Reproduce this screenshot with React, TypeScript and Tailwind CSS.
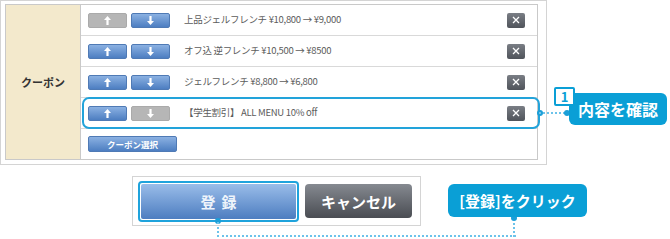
import React from "react";

const rows = [
  { text: "上品ジェルフレンチ ¥10,800 → ¥9,000", up: false, down: true },
  { text: "オフ込 逆フレンチ ¥10,500 → ¥8500", up: true, down: true },
  { text: "ジェルフレンチ ¥8,800 → ¥6,800", up: true, down: true },
  { text: "【学生割引】 ALL MENU 10% off", up: true, down: false, active: true },
];

function Arrow({ dir }: { dir: "up" | "down" }) {
  return (
    <svg width="7" height="9" viewBox="0 0 7 9" className={dir === "down" ? "rotate-180" : ""}>
      <path d="M3.5 0 L7 4 L4.6 4 L4.6 9 L2.4 9 L2.4 4 L0 4 Z" fill="#fff" />
    </svg>
  );
}

function MoveBtn({ dir, on }: { dir: "up" | "down"; on: boolean }) {
  return (
    <div
      className={`w-[39px] h-[15px] rounded-[2px] flex items-center justify-center ${
        on
          ? "bg-gradient-to-b from-[#8bb1e2] to-[#4d7ec1] border border-[#4f7ab5]"
          : "bg-[#b6b6b6] border border-[#aaaaaa]"
      }`}
    >
      <Arrow dir={dir} />
    </div>
  );
}

function CloseBtn() {
  return (
    <div className="w-[18px] h-[15px] rounded-[2px] bg-gradient-to-b from-[#7a7e85] to-[#50545b] flex items-center justify-center">
      <svg width="8" height="8" viewBox="0 0 8 8">
        <path d="M1 1 L7 7 M7 1 L1 7" stroke="#fff" strokeWidth="1.3" />
      </svg>
    </div>
  );
}

export default function App() {
  return (
    <div
      className="relative w-[670px] h-[239px] bg-white overflow-hidden"
      style={{ fontFamily: '"Noto Sans CJK JP", "Noto Sans", sans-serif' }}
    >
      <div className="w-[547px] h-[165px] border border-[#d4d4d4] pl-[4px] pr-[8px] pt-[3px]">
        <div className="flex border border-[#c9c9c9] h-[156px]">
          <div className="w-[75px] shrink-0 bg-[#f3e9cc] border-r border-[#c9c9c9] flex items-center justify-center">
            <span className="text-[11px] font-bold text-[#333] leading-none">クーポン</span>
          </div>
          <div className="flex-1 flex flex-col">
            {rows.map((r, i) => (
              <div
                key={i}
                className="relative h-[31px] shrink-0 border-b border-[#d9d9d9] flex items-center pl-[7px] pr-[12px]"
              >
                {r.active && (
                  <>
                    <div className="absolute left-[1px] right-[-3px] top-[-1px] bottom-[-1px] border-2 border-[#22a3da] rounded-[7px]" />
                    <div className="absolute right-[-6px] top-[12px] w-[6px] h-[6px] rounded-full bg-[#1b9fd8]" />
                  </>
                )}
                <div className="flex gap-[4px]">
                  <MoveBtn dir="up" on={r.up} />
                  <MoveBtn dir="down" on={r.down} />
                </div>
                <span className="ml-[14px] flex-1 text-[9.5px] text-[#5c5c5c] leading-none tracking-[-0.3px]">
                  {r.text}
                </span>
                <CloseBtn />
              </div>
            ))}
            <div className="flex-1 flex items-center pl-[7px]">
              <div className="w-[89px] h-[16px] rounded-[2px] bg-gradient-to-b from-[#8bb1e2] to-[#4d7ec1] border border-[#4f7ab5] flex items-center justify-center">
                <span className="text-[8.5px] text-white font-bold leading-none">クーポン選択</span>
              </div>
            </div>
          </div>
        </div>
      </div>

      <div className="ml-[132px] mt-[11px] w-[289px] h-[50px] border border-[#d4d4d4] flex items-center pl-[5px] gap-[6px]">
        <div className="w-[161px] h-[41px] rounded-[4px] border-2 border-[#1fa3dc] p-[1px] mt-[1px]">
          <div className="w-full h-full rounded-[2px] bg-gradient-to-b from-[#9abde9] to-[#4d7dc0] flex items-center justify-center">
            <span className="text-[15px] font-bold text-[#eef4fb] tracking-[6px] leading-none pl-[6px]">登録</span>
          </div>
        </div>
        <div className="w-[107px] h-[34px] rounded-[4px] bg-gradient-to-b from-[#868a91] to-[#4a4d53] flex items-center justify-center">
          <span className="text-[15px] font-bold text-white leading-none">キャンセル</span>
        </div>
      </div>

      {/* callout 1 */}
      <div className="absolute left-[539px] top-[112px] w-[30px] border-t-2 border-dotted border-[#6cc3ea]" />
      <div className="absolute left-[564px] top-[110px] w-[6px] h-[6px] rounded-full bg-[#1b9fd8]" />
      <div className="absolute left-[569px] top-[93px] w-[98px] h-[32px] rounded-[6px] bg-[#0a9fd6] flex items-center justify-center">
        <span className="text-[16px] font-bold text-white leading-none">内容を確認</span>
      </div>
      <div className="absolute left-[554px] top-[87px] w-[21px] h-[19px] bg-white border-2 border-[#0a9fd6] rounded-[2px] flex items-center justify-center">
        <span className="text-[13px] font-bold text-[#0a9fd6] leading-none">1</span>
      </div>

      {/* callout 2 */}
      <div className="absolute left-[215px] top-[218px] w-[6px] h-[6px] rounded-full bg-[#1b9fd8]" />
      <div className="absolute left-[217px] top-[222px] h-[15px] border-l-2 border-dotted border-[#6cc3ea]" />
      <div className="absolute left-[217px] top-[235px] w-[299px] border-t-2 border-dotted border-[#6cc3ea]" />
      <div className="absolute left-[513px] top-[218px] h-[19px] border-l-2 border-dotted border-[#6cc3ea]" />
      <div className="absolute left-[511px] top-[215px] w-[6px] h-[6px] rounded-full bg-[#1b9fd8]" />
      <div className="absolute left-[448px] top-[184px] w-[139px] h-[33px] rounded-[6px] bg-[#0a9fd6] flex items-center justify-center">
        <span className="text-[15px] font-bold text-white leading-none">[登録]をクリック</span>
      </div>
    </div>
  );
}
